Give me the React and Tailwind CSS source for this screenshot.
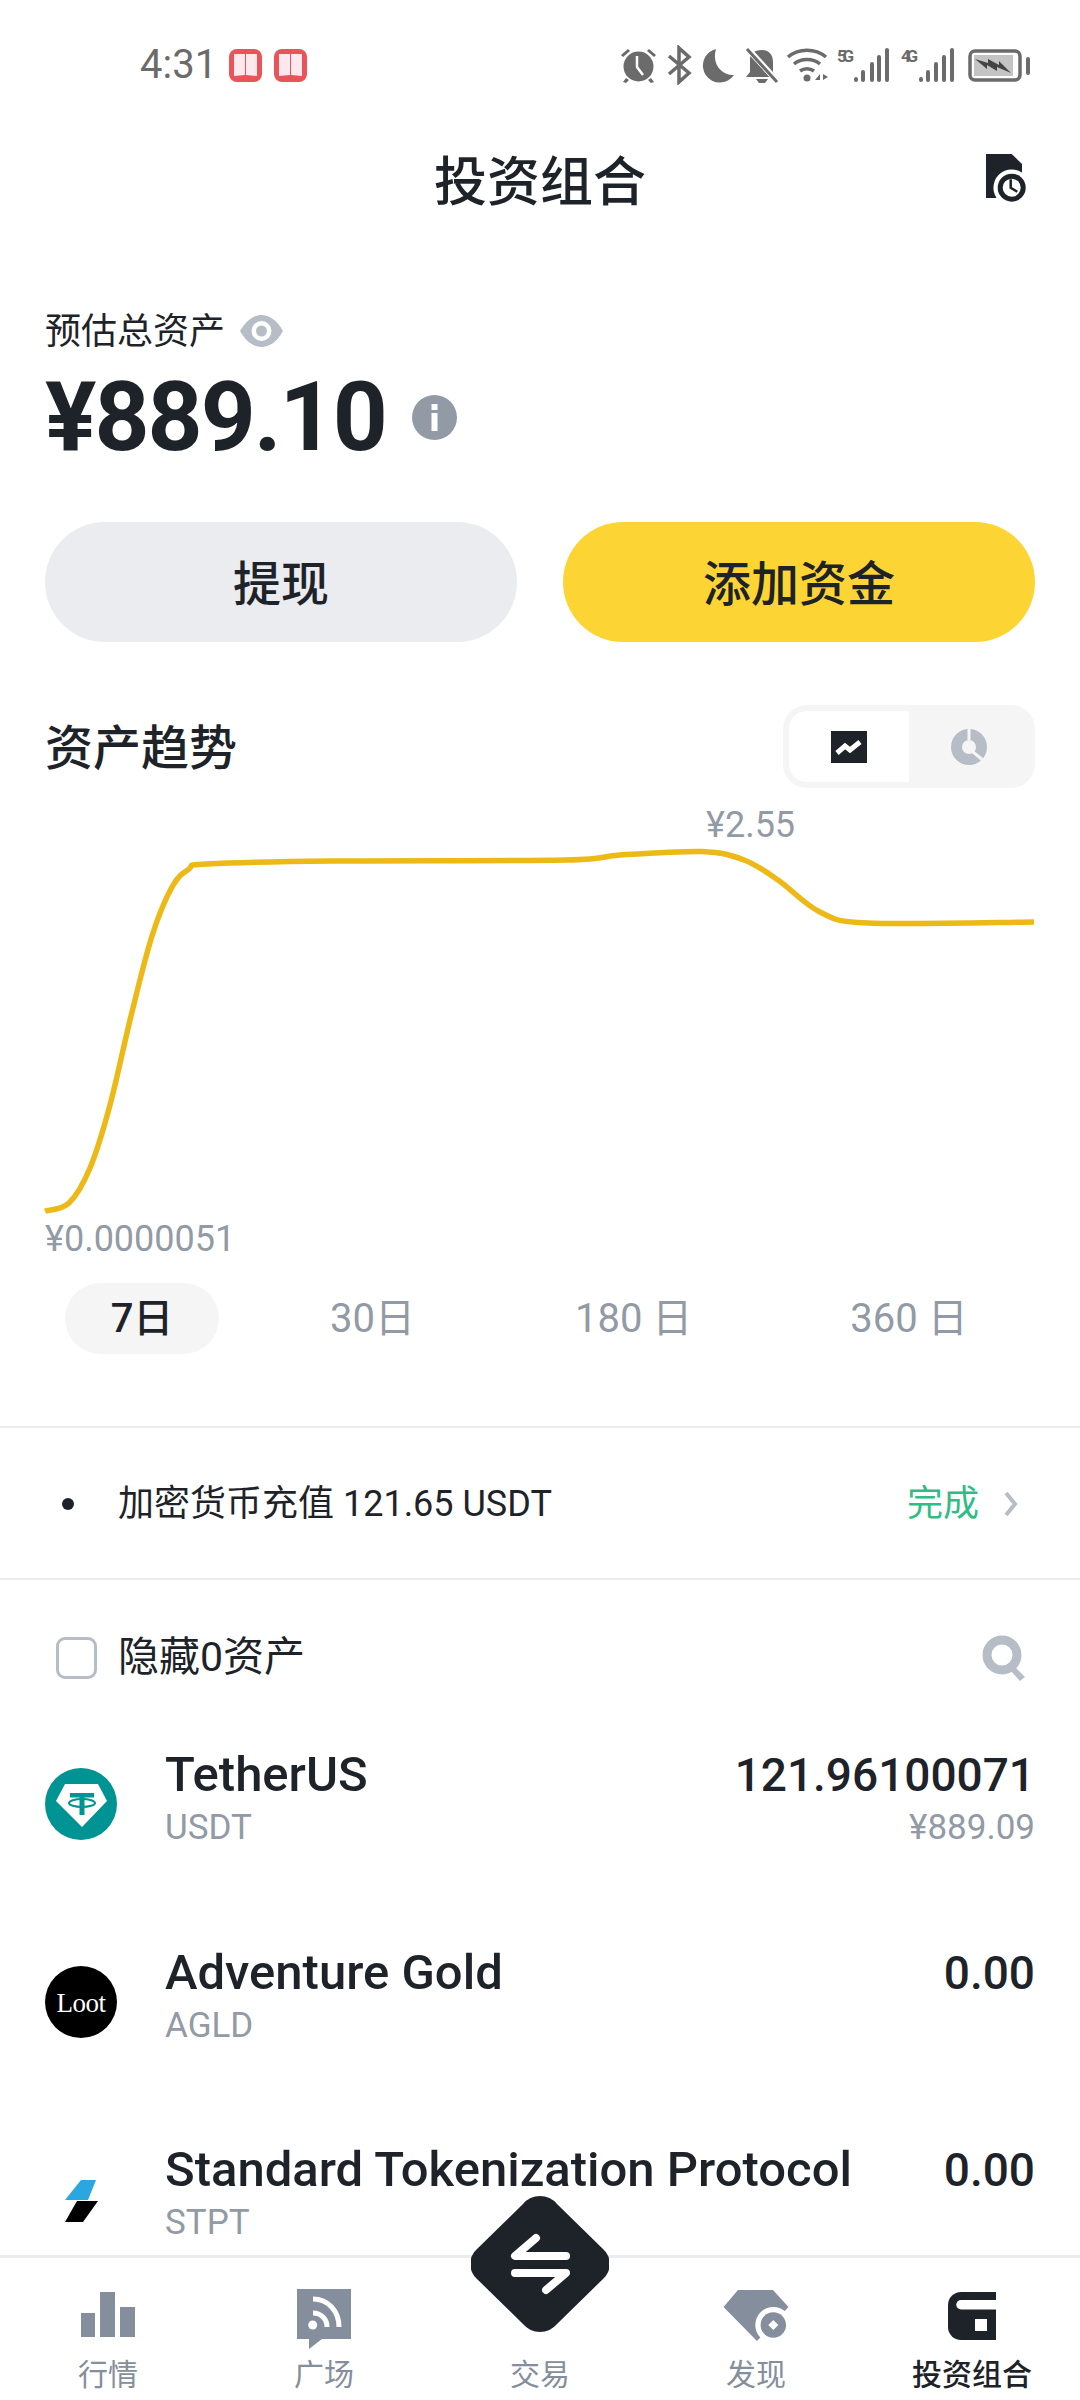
import React from 'react';

const CJK = '"Noto Sans CJK SC"';
const fontStack = `Roboto, ${CJK}, sans-serif`;

// points of the trend line, page coordinates
const trend = [
  [45, 1211], [69, 1203], [90, 1168], [110, 1105], [131, 1016], [152, 936], [172, 887], [189, 869], [207, 864],
  [331, 861], [565, 860], [620, 855], [702, 851.5], [744, 860], [778, 880], [820, 912], [868, 923], [1034, 922],
];

function smoothPath(pts) {
  let d = `M${pts[0][0]} ${pts[0][1]}`;
  for (let i = 0; i < pts.length - 1; i++) {
    const p0 = pts[i - 1] || pts[i];
    const p1 = pts[i];
    const p2 = pts[i + 1];
    const p3 = pts[i + 2] || p2;
    const c1x = p1[0] + (p2[0] - p0[0]) / 6;
    const c1y = p1[1] + (p2[1] - p0[1]) / 6;
    const c2x = p2[0] - (p3[0] - p1[0]) / 6;
    const c2y = p2[1] - (p3[1] - p1[1]) / 6;
    d += `C${c1x} ${Math.min(Math.max(c1y, 851), 1212)} ${c2x} ${Math.min(Math.max(c2y, 851), 1212)} ${p2[0]} ${p2[1]}`;
  }
  return d;
}

function StatusIcons() {
  const c = '#6b6b6b';
  return (
    <svg width="420" height="40" viewBox="0 0 420 40" className="block">
      {/* alarm */}
      <g fill={c}>
        <circle cx="18.500" cy="21.500" r="15" />
        <path d="M1 10l7-6 2 2-7 6zM36 10l-7-6-2 2 7 6zM6 33l-3 4 3 1 3-3zM31 33l3 4-3 1-3-3z" />
      </g>
      <path d="M17 11v11l6 8" stroke="#fff" strokeWidth="2.500" fill="none" />
      {/* bluetooth */}
      <path d="M49 11l20 17-10 9V3l10 9-20 17" stroke={c} strokeWidth="3.500" fill="none" />
      {/* moon */}
      <path d="M96 4a17 17 0 1 0 18 26c-10 1-23-9-18-26z" fill={c} />
      {/* muted bell */}
      <path d="M142 5c8 0 11 6 11 12v10l4 5h-31l4-5V14c0-5 4-9 12-9z" fill={c} />
      <path d="M136 34h12l-3 4h-6z" fill={c} />
      <path d="M127 3l31 34" stroke="#fff" strokeWidth="6" />
      <path d="M127 4l30 33" stroke={c} strokeWidth="3" />
      {/* wifi */}
      <g stroke={c} strokeWidth="3.500" fill="none">
        <path d="M168 12c11-9 27-9 38 0" />
        <path d="M174 19c7-6 19-6 26 0" />
        <path d="M180 26c4-3 10-3 14 0" />
      </g>
      <circle cx="187" cy="33" r="3.500" fill={c} />
      <path d="M195 35l5-6v6zM203 29v6l5-3z" fill={c} />
      {/* 5G */}
      <text x="217" y="17" fontFamily="Roboto" fontWeight="700" fontSize="17" fill={c} textLength="17">5G</text>
      <g stroke={c} strokeWidth="4" strokeLinecap="round">
        <path d="M236 35v-1M243 35v-8M252 35V19M259 35V12M267 35V5" />
      </g>
      {/* 4G */}
      <text x="281" y="17" fontFamily="Roboto" fontWeight="700" fontSize="17" fill={c} textLength="17">4G</text>
      <g stroke={c} strokeWidth="4" strokeLinecap="round">
        <path d="M301 35v-1M308 35v-8M316 35V19M324 35V12M332 35V5" />
      </g>
      {/* battery */}
      <rect x="350" y="6" width="50" height="29" rx="5" fill="none" stroke={c} strokeWidth="3.500" />
      <rect x="354" y="10" width="39" height="21" fill="#c4c4c4" />
      <path d="M355 14l13 4 0-4 11 6 0-4 12 12-14-6 0 4-10-6 0 4z" fill="#444" />
      <rect x="406" y="12" width="4" height="18" rx="2" fill={c} />
    </svg>
  );
}

function BookBadge() {
  return (
    <svg width="33" height="33" viewBox="0 0 33 33">
      <rect width="33" height="33" rx="8" fill="#e9535a" />
      <path d="M5 5h11v21l-11 1zM28 5h-11v21l11 1z" fill="#fde8ee" />
    </svg>
  );
}

function HistoryIcon() {
  return (
    <svg width="40" height="48" viewBox="0 0 40 48">
      <path d="M0 0h25.700L36 10v34H0z" fill="#1e2329" />
      <circle cx="25.700" cy="33.700" r="18.300" fill="#fff" />
      <circle cx="25.700" cy="33.700" r="14" fill="#1e2329" />
      <circle cx="25.700" cy="33.700" r="9" fill="#fff" />
      <path d="M24.700 25.300v8.400l6.600 4" stroke="#1e2329" strokeWidth="2.500" fill="none" />
    </svg>
  );
}

function EyeIcon() {
  return (
    <svg width="43" height="32" viewBox="0 0 43 32">
      <path d="M0 16C6 5 14 0 21.500 0S37 5 43 16c-6 11-14 16-21.500 16S6 27 0 16z" fill="#b7bdc6" />
      <circle cx="21.500" cy="16" r="10" fill="#fff" />
      <circle cx="21.500" cy="16" r="5.500" fill="#b7bdc6" />
    </svg>
  );
}

function InfoIcon() {
  return (
    <svg width="45" height="45" viewBox="0 0 45 45">
      <circle cx="22.500" cy="22.500" r="22.500" fill="#929aa5" />
      <rect x="19.500" y="9" width="6" height="6" fill="#fff" />
      <rect x="19.500" y="18" width="6" height="18" fill="#fff" />
    </svg>
  );
}

function TetherLogo() {
  return (
    <svg width="72" height="72" viewBox="0 0 72 72">
      <circle cx="36" cy="36" r="36" fill="#009393" />
      <path d="M20 16h33l9 17-25 26L11 33z" fill="#fff" />
      <path d="M25 25h24v4.500H39.500V47h-5V29.500H25z" fill="#009393" />
      <ellipse cx="37" cy="35" rx="13" ry="4" fill="none" stroke="#009393" strokeWidth="2" />
    </svg>
  );
}

function LootLogo() {
  return (
    <div className="flex h-[72px] w-[72px] items-center justify-center rounded-full bg-black pt-[3px] font-['Liberation_Serif',serif] text-[27px] font-light tracking-[-0.5px] text-white">
      Loot
    </div>
  );
}

function StptLogo() {
  return (
    <svg width="72" height="72" viewBox="0 0 72 72">
      <path d="M36 17h15l-8 20H20z" fill="#2ba6de" />
      <path d="M32 38h21L38 59H20z" fill="#000" />
    </svg>
  );
}

function AssetRow({ logo, name, symbol, amount, fiat }) {
  return (
    <div className="flex h-[197.500px] shrink-0">
      <div className="mt-[33px] w-[120px]">{logo}</div>
      <div className="flex min-w-0 flex-1 justify-between pt-[12px]">
        <div>
          <div className="h-[56px] text-[49px] leading-[56px] font-medium whitespace-nowrap text-[#1e2329]">{name}</div>
          <div className="mt-[5px] h-[40px] text-[35px] leading-[40px] text-[#929aa5]">{symbol}</div>
        </div>
        <div className="text-right">
          <div className="h-[56px] text-[46px] leading-[56px] font-medium text-[#1e2329]">{amount}</div>
          {fiat && <div className="mt-[5px] h-[40px] text-[35px] leading-[40px] text-[#929aa5]">{fiat}</div>}
        </div>
      </div>
    </div>
  );
}

const tabs = [
  {
    label: '行情',
    top: 'pt-[10px]',
    icon: (
      <svg width="54" height="45" viewBox="0 0 54 45" fill="#858e9c" className="block">
        <rect y="21" width="14" height="24" />
        <rect x="19" width="15" height="45" />
        <rect x="39" y="15" width="15" height="30" />
      </svg>
    ),
  },
  {
    label: '广场',
    top: 'pt-[7px]',
    icon: (
      <svg width="54" height="60" viewBox="0 0 54 60" className="block">
        <path d="M0 0h54v50H25L12 60V50H0z" fill="#858e9c" />
        <circle cx="15.700" cy="36" r="4.500" fill="#fff" />
        <path d="M16 24c8 0 14 6 14 14M16 10c15 0 26 12 26 28" stroke="#fff" strokeWidth="5" fill="none" />
      </svg>
    ),
  },
  {
    label: '发现',
    top: 'pt-[8px]',
    icon: (
      <svg width="66" height="52" viewBox="0 0 66 52" className="block">
        <path d="M15 0h35l15.500 17L34 51 .5 17z" fill="#858e9c" />
        <circle cx="50.300" cy="35" r="18" fill="#fff" />
        <circle cx="50.300" cy="35" r="12.700" fill="#858e9c" />
        <path d="M50.300 30l5 5-5 5-5-5z" fill="#fff" />
      </svg>
    ),
  },
  {
    label: '投资组合',
    active: true,
    top: 'pt-[10px]',
    icon: (
      <svg width="48" height="48" viewBox="0 0 48 48" className="block">
        <path d="M13 0h35v48H13A13 13 0 0 1 0 35V13A13 13 0 0 1 13 0z" fill="#1e2329" />
        <path d="M13 8h35v9.500H13a4.750 4.750 0 0 1 0-9.500z" fill="#fff" />
        <rect x="27" y="27" width="12" height="12" fill="#fff" />
      </svg>
    ),
  },
];

function NavTab({ label, icon, active, top }) {
  return (
    <div className="flex w-[216px] flex-col items-center">
      <div className={`h-[62px] ${top}`}>{icon}</div>
      <div className={`mt-[11px] text-[30px] leading-[40px] ${active ? 'font-medium text-[#1e2329]' : 'text-[#858e9c]'}`}>{label}</div>
    </div>
  );
}

export default function App() {
  return (
    <div className="relative flex h-[2400px] w-[1080px] flex-col overflow-hidden bg-white" style={{ fontFamily: fontStack }}>
      {/* status bar */}
      <div className="flex h-[130px] shrink-0 items-center justify-between pr-[40px] pl-[140px]">
        <div className="flex items-center gap-[12px]">
          <span className="text-[40px] leading-none text-[#6b6b6b]">4:31</span>
          <BookBadge />
          <BookBadge />
        </div>
        <StatusIcons />
      </div>

      {/* header */}
      <div className="flex h-[102px] shrink-0 items-center justify-center pt-[5px]">
        <h1 className="text-[53px] leading-none font-medium text-[#1e2329]">投资组合</h1>
        <div className="absolute top-[154px] right-[54px]">
          <HistoryIcon />
        </div>
      </div>

      {/* balance */}
      <div className="shrink-0 px-[45px]">
        <div className="mt-[74px] flex h-[50px] items-center gap-[15px]">
          <span className="pt-[2px] text-[36px] text-[#1e2329]">预估总资产</span>
          <EyeIcon />
        </div>
        <div className="mt-[6px] flex h-[110px] items-center gap-[26px]">
          <span className="text-[96px] leading-none font-bold tracking-[-2px] text-[#1e2329]">¥889.10</span>
          <InfoIcon />
        </div>
        <div className="mt-[50px] flex gap-[46px]">
          <button className="h-[120px] w-[472px] rounded-full bg-[#eaecef] pt-[5px] text-[48px] font-medium text-[#1e2329]">提现</button>
          <button className="h-[120px] w-[472px] rounded-full bg-[#fcd535] pt-[5px] text-[48px] font-medium text-[#1e2329]">添加资金</button>
        </div>

        {/* trend */}
        <div className="mt-[63px] flex h-[83px] items-center justify-between">
          <span className="pt-[5px] text-[48px] leading-none font-medium text-[#1e2329]">资产趋势</span>
          <div className="flex h-[83px] w-[252px] rounded-[24px] bg-[#f5f5f5] p-[6px]">
            <div className="flex w-[120px] items-center justify-center rounded-l-[18px] bg-white">
              <svg width="36" height="32" viewBox="0 0 36 32">
                <rect width="36" height="32" fill="#1e2329" />
                <path d="M6 22l8-7 5 4 10-8" stroke="#fff" strokeWidth="5" fill="none" />
              </svg>
            </div>
            <div className="flex flex-1 items-center justify-center">
              <svg width="36" height="36" viewBox="0 0 36 36">
                <circle cx="18" cy="18" r="18" fill="#b7bdc6" />
                <circle cx="18" cy="18" r="7" fill="#f5f5f5" />
                <path d="M18 0v11M22 23l11 9" stroke="#f5f5f5" strokeWidth="3" />
              </svg>
            </div>
          </div>
        </div>
      </div>

      {/* chart */}
      <div className="relative h-[495px] shrink-0">
        <svg width="1080" height="495" viewBox="0 788 1080 495" className="block">
          <path d={smoothPath(trend)} fill="none" stroke="#ecb916" strokeWidth="5.500" />
        </svg>
        <span className="absolute top-[17px] left-[706px] text-[36px] leading-[40px] text-[#929aa5]">¥2.55</span>
        <span className="absolute top-[431px] left-[45px] text-[36px] leading-[40px] text-[#929aa5]">¥0.0000051</span>
      </div>

      {/* period */}
      <div className="flex h-[71px] shrink-0 items-center text-[40px] text-[#929aa5]">
        <div className="ml-[65px] flex h-[71px] w-[154px] items-center justify-center rounded-full bg-[#f5f5f5] font-medium text-[#1e2329]">7日</div>
        <span className="ml-[111px]">30日</span>
        <span className="ml-[160px]">180 日</span>
        <span className="ml-[158px]">360 日</span>
      </div>

      {/* latest record */}
      <div className="mt-[72px] flex h-[154px] shrink-0 items-center border-y-2 border-[#eaecef] pt-[2px] pr-[62px] pl-[62px]">
        <div className="h-[12px] w-[12px] rounded-full bg-[#1e2329]" />
        <span className="ml-[44px] flex-1 text-[36px] text-[#1e2329]">加密货币充值 121.65 USDT</span>
        <span className="text-[36px] text-[#2ebd85]">完成</span>
        <svg width="14" height="24" viewBox="0 0 14 24" className="ml-[25px]">
          <path d="M2 1l9 11-9 11" fill="none" stroke="#b7bdc6" strokeWidth="4" />
        </svg>
      </div>

      {/* hide small assets */}
      <div className="flex h-[155px] shrink-0 items-center pr-[52px] pl-[56px]">
        <div className="h-[42px] w-[41px] rounded-[9px] border-[3px] border-[#b7bdc6]" />
        <span className="ml-[21px] flex-1 text-[41px] text-[#1e2329]">隐藏0资产</span>
        <svg width="46" height="46" viewBox="0 0 46 46">
          <circle cx="20" cy="20" r="15" fill="none" stroke="#b7bdc6" strokeWidth="9" />
          <path d="M30 29l13 13-5 4-12-13z" fill="#b7bdc6" />
        </svg>
      </div>

      {/* assets */}
      <div className="min-h-0 flex-1 overflow-hidden pr-[45px] pl-[45px]">
        <AssetRow logo={<TetherLogo />} name="TetherUS" symbol="USDT" amount="121.96100071" fiat="¥889.09" />
        <AssetRow logo={<LootLogo />} name="Adventure Gold" symbol="AGLD" amount="0.00" />
        <AssetRow logo={<StptLogo />} name="Standard Tokenization Protocol" symbol="STPT" amount="0.00" />
      </div>

      {/* bottom nav */}
      <div className="relative flex h-[145px] shrink-0 border-t-[3px] border-[#eaecef] bg-white pt-[24px]">
        <NavTab {...tabs[0]} />
        <NavTab {...tabs[1]} />
        <div className="flex w-[216px] flex-col items-center">
          <div className="mt-[73px] text-[30px] leading-[40px] text-[#858e9c]">交易</div>
        </div>
        <NavTab {...tabs[2]} />
        <NavTab {...tabs[3]} />
        <div className="absolute -top-[63px] left-[471px]">
          <svg width="138" height="138" viewBox="0 0 138 138">
            <path d="M52 9a22 22 0 0 1 34 0l46 45a20 20 0 0 1 0 30l-46 45a22 22 0 0 1-34 0L6 84a20 20 0 0 1 0-30z" fill="#1e2329" />
            <path d="M65 43L44 61h51M44 78h51L75 95" fill="none" stroke="#fff" strokeWidth="8" strokeLinecap="round" strokeLinejoin="round" />
          </svg>
        </div>
      </div>
    </div>
  );
}
